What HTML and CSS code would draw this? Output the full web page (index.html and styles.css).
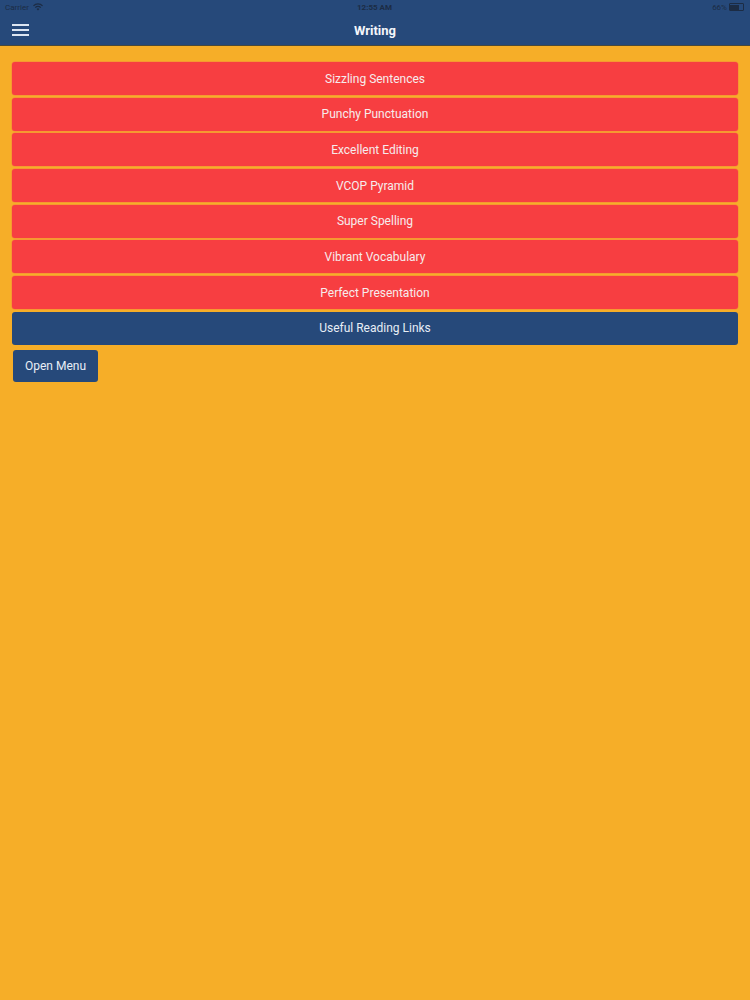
FILE: index.html
```html
<!DOCTYPE html>
<html>
<head>
<meta charset="utf-8">
<link rel="stylesheet" href="styles.css">
</head>
<body>
<header class="topbar">
  <div class="status">
    <span class="carrier">Carrier
      <svg class="wifi" width="10" height="8" viewBox="0 0 10 8"><path d="M5 7.5 L3.6 6 A2 2 0 0 1 6.4 6 Z M1.8 4.2 A4.5 4.5 0 0 1 8.2 4.2 L7.3 5.1 A3.2 3.2 0 0 0 2.7 5.1 Z M0 2.4 A7 7 0 0 1 10 2.4 L9.1 3.3 A5.8 5.8 0 0 0 0.9 3.3 Z" fill="#1c2c44"/></svg>
    </span>
    <span class="time">12:55 AM</span>
    <span class="battery">66% <span class="batt"><span class="batt-fill"></span></span></span>
  </div>
  <div class="navrow">
    <div class="burger"><span></span><span></span><span></span></div>
    <div class="title">Writing</div>
  </div>
</header>
<main class="content">
  <div class="list">
    <div class="btn red">Sizzling Sentences</div>
    <div class="btn red">Punchy Punctuation</div>
    <div class="btn red">Excellent Editing</div>
    <div class="btn red">VCOP Pyramid</div>
    <div class="btn red">Super Spelling</div>
    <div class="btn red">Vibrant Vocabulary</div>
    <div class="btn red">Perfect Presentation</div>
    <div class="btn blue">Useful Reading Links</div>
  </div>
  <div class="menu-btn">Open Menu</div>
</main>
</body>
</html>
```
FILE: styles.css
```css
html, body {
  margin: 0;
  padding: 0;
}
body {
  background: #f6ae28;
  font-family: Roboto, "Liberation Sans", Arial, sans-serif;
  width: 750px;
  height: 1000px;
}
.topbar {
  background: #26497a;
  height: 45px;
  border-bottom: 1px solid #4a4a3a;
  position: relative;
}
.status {
  height: 14px;
  display: flex;
  align-items: center;
  justify-content: space-between;
  padding: 0 6px 0 5px;
  font-size: 8px;
  color: #1c2c44;
}
.carrier {
  display: flex;
  align-items: center;
  gap: 4px;
  width: 80px;
}
.time {
  font-weight: bold;
}
.battery {
  width: 80px;
  display: flex;
  justify-content: flex-end;
  align-items: center;
  gap: 2px;
}
.batt {
  width: 12px;
  height: 5px;
  border: 0.5px solid #1c2c44;
  border-radius: 1px;
  display: inline-block;
  padding: 0.5px;
}
.batt-fill {
  display: block;
  width: 70%;
  height: 100%;
  background: #1c2c44;
}
.navrow {
  height: 31px;
  display: flex;
  align-items: center;
  position: relative;
}
.burger {
  display: flex;
  flex-direction: column;
  gap: 3px;
  margin-left: 12px;
  margin-top: 1px;
}
.burger span {
  display: block;
  width: 17px;
  height: 2px;
  background: #dde6f2;
}
.title {
  position: absolute;
  left: 0;
  right: 0;
  top: 9px;
  text-align: center;
  color: #f4f6fa;
  font-weight: bold;
  font-size: 13px;
  pointer-events: none;
}
.content {
  padding: 16px 12px 0 12px;
}
.list {
  display: flex;
  flex-direction: column;
  gap: 2.7px;
}
.btn {
  height: 33px;
  border-radius: 3px;
  display: flex;
  align-items: center;
  justify-content: center;
  font-size: 12px;
  color: #f6ecec;
}
.btn.red {
  background: #f73e41;
  box-shadow: 0 0 0 0.5px #f5823a;
}
.btn.blue {
  background: #26497a;
  color: #e8eef6;
}
.menu-btn {
  margin-top: 5px;
  margin-left: 1px;
  width: 85px;
  height: 32px;
  background: #26497a;
  border-radius: 3px;
  color: #e8eef6;
  font-size: 12px;
  display: flex;
  align-items: center;
  justify-content: center;
}
```
